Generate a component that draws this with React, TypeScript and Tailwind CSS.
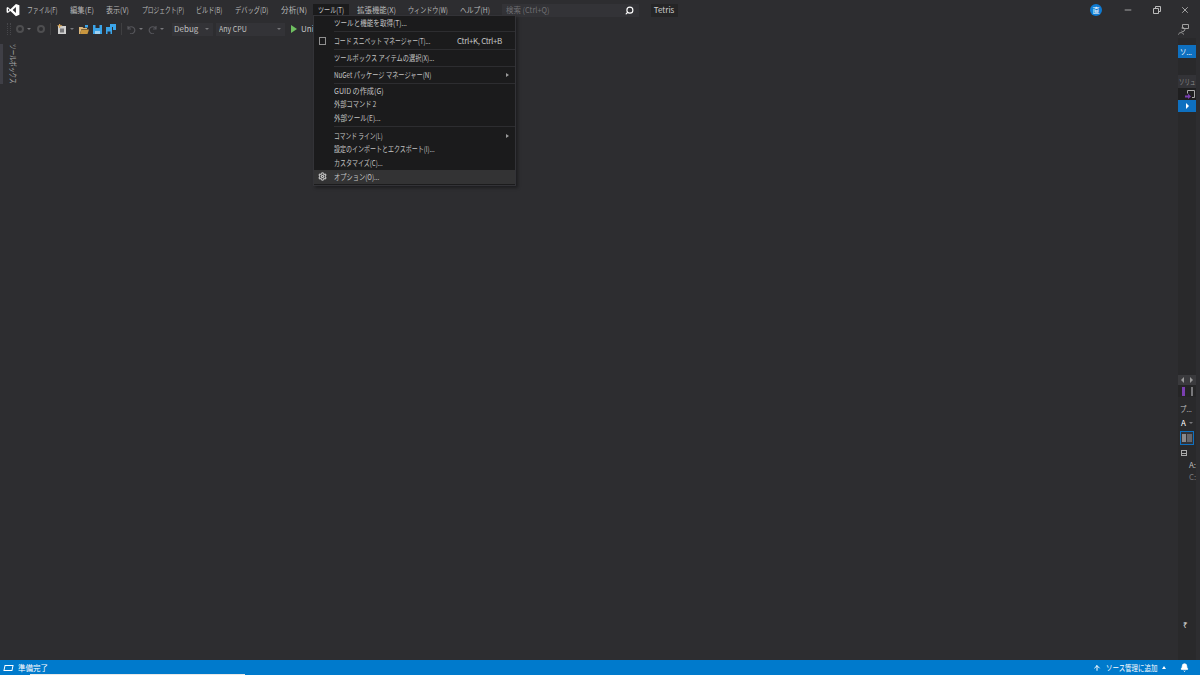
import type { ReactNode } from 'react';
import { Bell, Search, Settings, X, Minus, ArrowUp } from 'lucide-react';

const font = { fontFamily: '"Noto Sans CJK JP", "Noto Sans", sans-serif' };

const menus = [
  { label: 'ファイル(F)', cls: 'w-[30px] scale-x-[0.73]' },
  { label: '編集(E)', cls: 'w-[24px] scale-x-[0.92]' },
  { label: '表示(V)', cls: 'w-[23px] scale-x-[0.88]' },
  { label: 'プロジェクト(P)', cls: 'w-[42px] scale-x-[0.72]' },
  { label: 'ビルド(B)', cls: 'w-[26px] scale-x-[0.76]' },
  { label: 'デバッグ(D)', cls: 'w-[33px] scale-x-[0.78]' },
  { label: '分析(N)', cls: 'w-[25px] scale-x-[0.96]' },
  { label: 'ツール(T)', cls: 'w-[26px] scale-x-[0.76]' },
  { label: '拡張機能(X)', cls: 'w-[39px] scale-x-[0.93]' },
  { label: 'ウィンドウ(W)', cls: 'w-[39px] scale-x-[0.76]' },
  { label: 'ヘルプ(H)', cls: 'w-[29px] scale-x-[0.85]' },
];

// the original UI font has narrow kana, so labels get squeezed horizontally
function Squeezed({ cls, children }: { cls: string; children: ReactNode }) {
  return <span className={`inline-block origin-left whitespace-nowrap ${cls}`}>{children}</span>;
}

function Caret() {
  return <span className="mx-[3px] h-0 w-0 border-x-[2px] border-t-[2px] border-x-transparent border-t-[#77777a]" />;
}

function Separator() {
  return <div className="ml-[20px] my-[1.2px] h-px bg-[#2d2d30]" />;
}

type MenuItemProps = {
  label: string;
  squeeze: string;
  shortcut?: string;
  icon?: ReactNode;
  arrow?: boolean;
  active?: boolean;
};

function MenuItem({ label, squeeze, shortcut, icon, arrow, active }: MenuItemProps) {
  return (
    <div className={`flex h-[13.7px] items-center pr-[6px] text-[8px] leading-none text-[#c4c4c4] ${active ? 'bg-[#333334]' : ''}`}>
      <span className="flex w-[20px] shrink-0 items-center justify-center">{icon}</span>
      <Squeezed cls={squeeze}>{label}</Squeezed>
      {shortcut && <span className="ml-auto mr-[7px] whitespace-nowrap tracking-[-0.35px]">{shortcut}</span>}
      {arrow && <span className="ml-auto h-0 w-0 border-y-[2px] border-l-[3px] border-y-transparent border-l-[#999]" />}
    </div>
  );
}

function ToolsMenu() {
  return (
    <div className="absolute left-[313px] top-[15px] z-10 w-[203px] border border-[#333337] bg-[#1b1b1c] pb-[1px] shadow-[2px_2px_3px_rgba(0,0,0,0.35)]">
      <MenuItem label="ツールと機能を取得(T)..." squeeze="scale-x-[0.82]" />
      <Separator />
      <div className="pt-[1px]">
        <MenuItem
          label="コード スニペット マネージャー(T)..."
          squeeze="w-[100px] scale-x-[0.73]"
          shortcut="Ctrl+K, Ctrl+B"
          icon={<span className="mr-[3px] h-[8px] w-[7px] border border-[#909090]" />}
        />
      </div>
      <Separator />
      <MenuItem label="ツールボックス アイテムの選択(X)..." squeeze="scale-x-[0.775]" />
      <Separator />
      <MenuItem label="NuGet パッケージ マネージャー(N)" squeeze="scale-x-[0.776]" arrow />
      <div className="ml-[20px] mt-[1px] h-px bg-[#2d2d30]" />
      <MenuItem label="GUID の作成(G)" squeeze="scale-x-[0.89]" />
      <MenuItem label="外部コマンド 2" squeeze="scale-x-[0.78]" />
      <MenuItem label="外部ツール(E)..." squeeze="scale-x-[0.82]" />
      <div className="ml-[20px] my-[1.5px] h-px bg-[#2d2d30]" />
      <MenuItem label="コマンド ライン(L)" squeeze="scale-x-[0.72]" arrow />
      <MenuItem label="設定のインポートとエクスポート(I)..." squeeze="scale-x-[0.75]" />
      <MenuItem label="カスタマイズ(C)..." squeeze="scale-x-[0.75]" />
      <MenuItem
        label="オプション(O)..."
        squeeze="scale-x-[0.78]"
        active
        icon={<Settings size={9} strokeWidth={3} className="mr-[3px] text-[#c0c0c0]" />}
      />
    </div>
  );
}

function TitleBar() {
  return (
    <div className="flex h-[20px] shrink-0 items-center text-[8px] text-[#b8b8b8]">
      <svg width="14" height="14" viewBox="0 0 24 24" className="ml-[6px] mr-[7px] shrink-0">
        <path fill="#fff" fillRule="evenodd" d="M17 1.500 23 4v16l-6 2.500-9.500-9L3 17l-2-1V8l2-1 4.500 3.500zM17 7l-5.500 5 5.500 5zM3.500 9.500v5L6 12z" />
      </svg>
      <div className="flex items-center gap-[12.6px]">
        {menus.map((m) =>
          m.label === 'ツール(T)' ? (
            <div key={m.label} className="-mx-[5px] -mt-[1px] flex h-[11px] items-center bg-[#1b1b1c] px-[5px] text-[#c8c8c8]">
              <Squeezed cls={m.cls}>{m.label}</Squeezed>
            </div>
          ) : (
            <Squeezed key={m.label} cls={m.cls}>
              {m.label}
            </Squeezed>
          ),
        )}
      </div>
      <div className="ml-[12.6px] flex h-[13px] w-[137px] items-center justify-between bg-[#333337] px-[4px] text-[#6f6f72]">
        <Squeezed cls="scale-x-[0.93]">検索 (Ctrl+Q)</Squeezed>
        <Search size={9} strokeWidth={3} className="mr-[1px] -scale-x-100 text-white" />
      </div>
      <div className="ml-[12px] flex h-[13px] w-[27px] items-center justify-center bg-[#252526] text-[#d0d0d0]">Tetris</div>
      <div className="ml-auto flex items-center">
        <span className="flex h-[12px] w-[12px] items-center justify-center rounded-full bg-[#0e7ad2] text-[7px] text-white">直</span>
        <Minus size={10} className="ml-[21px] text-[#bbb]" />
        <svg width="8" height="8" viewBox="0 0 8 8" className="ml-[20px] text-[#bbb]" fill="none" stroke="currentColor">
          <path d="M.5 2.500h5v5h-5zM2.500 2.500v-2h5v5h-2" />
        </svg>
        <X size={10} className="ml-[19px] mr-[10px] text-[#bbb]" />
      </div>
    </div>
  );
}

function Toolbar() {
  return (
    <div className="flex h-[18px] shrink-0 items-center pl-[7px] text-[8px] text-[#c0c0c0]">
      <div className="h-[12px] w-[4px] border-x border-dotted border-[#46464a]" />
      <span className="ml-[5px] h-[8px] w-[8px] rounded-full border-2 border-[#4e4e50]" />
      <Caret />
      <span className="ml-[3px] h-[8px] w-[8px] rounded-full border-2 border-[#4e4e50]" />
      <div className="mx-[5px] h-[12px] w-px bg-[#3f3f41]" />
      <svg width="10" height="10" viewBox="0 0 10 10" className="ml-[1px]">
        <path fill="#cfcfcf" d="M1 2h8v8H1z" />
        <path fill="#77777a" d="M3 4.500h4v4H3z" />
        <path fill="#d8a657" d="M2 0h1.200v1.200h2v1h-2V4H2V2.200H.5v-1H2z" />
      </svg>
      <Caret />
      <svg width="10" height="9" viewBox="0 0 10 9" className="ml-[2px]">
        <path fill="#dcb67a" d="M0 2h3.500l1 1H8v1H2.500L1 9H0z" />
        <path fill="#c9963f" d="M2.500 4.500H10L8.500 9H1z" />
        <path fill="#3ba4e8" d="M6 0h3v2.500H6z" />
      </svg>
      <svg width="9" height="9" viewBox="0 0 9 9" className="ml-[4px]">
        <path fill="#3ba4e8" d="M0 0h9v9H0z" />
        <path fill="#2d2d30" d="M2.500 0h4v3h-4z" />
        <path fill="#9fd0f0" d="M2 6h5v3H2z" />
      </svg>
      <svg width="10" height="10" viewBox="0 0 10 10" className="ml-[4px]">
        <path fill="#3ba4e8" d="M0 3h6v7H0zM4 0h6v6H7V3H4z" />
        <path fill="#2d2d30" d="M1.500 7.500h3V10h-3z" />
      </svg>
      <div className="mx-[5px] h-[12px] w-px bg-[#3f3f41]" />
      <svg width="9" height="9" viewBox="0 0 9 9" fill="none" stroke="#55555a" strokeWidth="1.200">
        <path d="M1 1v3h3M1 4a3.500 3.500 0 1 1 2 4.500" />
      </svg>
      <Caret />
      <svg width="9" height="9" viewBox="0 0 9 9" fill="none" stroke="#55555a" strokeWidth="1.200" className="ml-[2px]">
        <path d="M8 1v3H5M8 4a3.500 3.500 0 1 0-2 4.500" />
      </svg>
      <Caret />
      <div className="ml-[5px] flex h-[13px] w-[41px] items-center justify-between bg-[#333337] pl-[2px] pr-[1px]">
        <span>Debug</span>
        <Caret />
      </div>
      <div className="ml-[3px] flex h-[13px] w-[69px] items-center justify-between bg-[#333337] pl-[3px] pr-[1px]">
        <Squeezed cls="scale-x-[0.88]">Any CPU</Squeezed>
        <Caret />
      </div>
      <span className="ml-[6px] h-0 w-0 border-y-[4px] border-l-[6px] border-y-transparent border-l-[#6fbf60]" />
      <span className="ml-[4px]">Uni</span>
      <svg width="11" height="11" viewBox="0 0 11 11" fill="none" stroke="#a0a0a0" className="ml-auto mr-[11px]">
        <path d="M4.500.5h6v4h-6zM3.500 4a2 2 0 1 1-.1 3M.5 10.500C1 8 5 8 5.500 10.500" />
      </svg>
    </div>
  );
}

function RightStrip() {
  return (
    <div className="mr-[4px] ml-[1px] flex w-[18px] shrink-0 flex-col items-start bg-[#29292b] pt-[7px] text-[8px] text-[#c0c0c0]">
      <div className="flex h-[13px] w-[18px] items-center bg-[#0e70c0] pl-[2px] text-white">
        <Squeezed cls="scale-x-[0.8]">ソ...</Squeezed>
      </div>
      <div className="h-[17px]" />
      <div className="flex h-[13px] w-[18px] items-center bg-[#333337] pl-[1px] text-[#8a8a8a]">
        <Squeezed cls="scale-x-[0.68]">ソリュ</Squeezed>
      </div>
      <div className="flex h-[12px] w-[18px] items-center justify-end bg-[#1f1f20] pr-[1px]">
        <svg width="10" height="9" viewBox="0 0 10 9" fill="none">
          <path stroke="#aaa" d="M2.500 3.500V.5h7v7H7" />
          <path fill="#7a3fb0" d="M0 5.500h3V3.500l3 3-3 2.500V7.500H0z" />
        </svg>
      </div>
      <div className="flex h-[12px] w-[18px] items-center justify-center bg-[#0e70c0]">
        <span className="h-0 w-0 border-y-[3px] border-l-[3px] border-y-transparent border-l-white" />
      </div>
      <div className="h-[263px]" />
      <div className="flex h-[10px] w-[18px] items-center justify-around bg-[#3a3a3d]">
        <span className="h-0 w-0 border-y-[3px] border-r-[3px] border-y-transparent border-r-[#999]" />
        <span className="h-0 w-0 border-y-[3px] border-l-[3px] border-y-transparent border-l-[#999]" />
      </div>
      <div className="flex h-[12px] w-[18px] items-center gap-[6px] bg-[#252526] pl-[4px]">
        <span className="h-[9px] w-[3px] bg-[#7a3fb0]" />
        <span className="h-[9px] w-[2px] bg-[#77777a]" />
      </div>
      <div className="mt-[6px] flex h-[12px] w-[18px] items-center pl-[2px]">
        <Squeezed cls="scale-x-[0.8]">プ...</Squeezed>
      </div>
      <div className="mt-[3px] flex h-[10px] items-center pl-[3px] text-white">
        A<Caret />
      </div>
      <div className="mt-[3px] ml-[2px] flex h-[14px] w-[14px] items-center justify-center gap-[1px] border border-[#0e70c0] bg-[#333337]">
        <span className="h-[8px] w-[4px] bg-[#8a8a8c]" />
        <span className="h-[8px] w-[5px] bg-[#66666a]" />
      </div>
      <div className="ml-[3px] mt-[5px] flex h-[6px] w-[6px] items-center justify-center border border-[#aaa]">
        <span className="h-px w-[4px] bg-[#aaa]" />
      </div>
      <div className="ml-[11px] mt-[3px] leading-[12px] text-[#bbb]">A:</div>
      <div className="ml-[11px] leading-[12px] text-[#77777a]">C:</div>
      <div className="h-[136px]" />
      <div className="ml-[5px] leading-[12px] text-[#ddd]">₹</div>
    </div>
  );
}

function StatusBar() {
  return (
    <div className="relative flex h-[15px] shrink-0 items-center bg-[#007acc] text-[8px] text-white">
      <span className="ml-[4px] h-[6px] w-[9px] -skew-x-12 border border-white" />
      <Squeezed cls="ml-[5px] scale-x-[0.94]">準備完了</Squeezed>
      <div className="ml-auto flex items-center">
        <ArrowUp size={8} strokeWidth={3} />
        <Squeezed cls="ml-[5px] w-[52px] scale-x-[0.81]">ソース管理に追加</Squeezed>
        <span className="ml-[4px] h-0 w-0 border-x-[2.500px] border-b-[3px] border-x-transparent border-b-white" />
        <Bell size={9} fill="white" className="ml-[14px] mr-[11px]" />
      </div>
      <div className="absolute bottom-0 left-[30px] h-[1px] w-[215px] bg-[#e8e8e8]" />
    </div>
  );
}

export default function App() {
  return (
    <div className="relative flex h-[675px] w-[1200px] flex-col overflow-hidden bg-[#2d2d30]" style={font}>
      <TitleBar />
      <Toolbar />
      <div className="flex min-h-0 flex-1">
        <div className="mt-[6px] h-[40px] w-[3px] shrink-0 self-start bg-[#3f3f46]" />
        <div className="ml-[4px] mt-[6px] h-[40px] origin-top scale-y-[0.71] whitespace-nowrap text-[8px] text-[#a8a8a8] [text-orientation:sideways] [writing-mode:vertical-rl]">ツールボックス</div>
        <div className="flex-1" />
        <RightStrip />
      </div>
      <StatusBar />
      <ToolsMenu />
    </div>
  );
}
